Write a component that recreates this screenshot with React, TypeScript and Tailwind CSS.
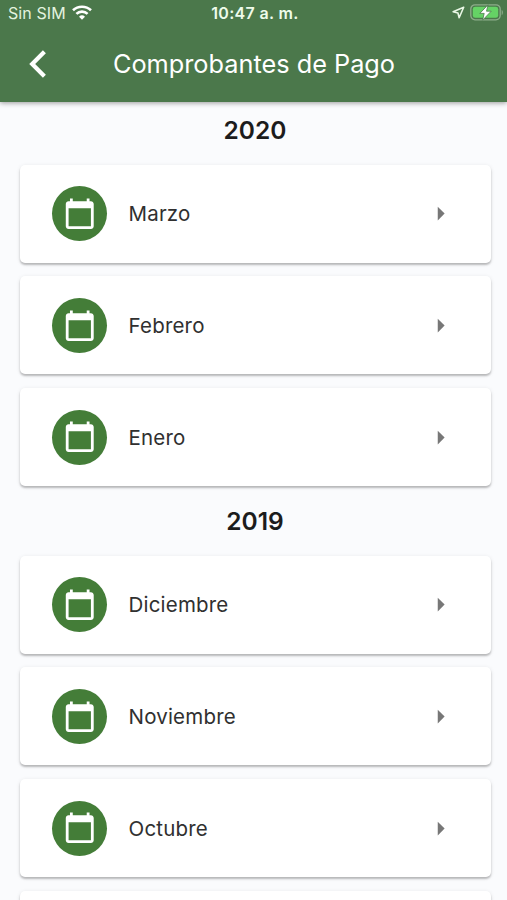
import React from 'react';
import { MdArrowRight, MdCalendarToday } from 'react-icons/md';

const years = [
  { year: '2020', months: ['Marzo', 'Febrero', 'Enero'] },
  { year: '2019', months: ['Diciembre', 'Noviembre', 'Octubre'] },
];

const StatusBar = () => (
  <div className="grid grid-cols-3 items-center h-[25px] pl-2 pr-[3px]">
    <div className="flex items-center gap-[6px]">
      <span className="text-[16px] leading-none tracking-[0.1px] text-[#e3f3df] whitespace-nowrap">Sin SIM</span>
      <svg width="20" height="15" viewBox="0 0 20 15" fill="none" stroke="#fff" strokeWidth="2.6">
        <path d="M1 5.3a13 13 0 0 1 18 0" />
        <path d="M4.4 8.9a8 8 0 0 1 11.2 0" />
        <path d="M10 14.7l-3-3a4.4 4.4 0 0 1 6 0z" fill="#fff" stroke="none" />
      </svg>
    </div>
    <span className="-ml-0.5 text-center text-[16px] leading-none font-semibold tracking-[0.35px] text-[#eefbea] whitespace-nowrap">
      10:47 a. m.
    </span>
    <div className="flex items-center justify-end gap-[5px]">
      <svg width="13" height="13" viewBox="0 0 14 14" fill="none" stroke="#e9f7e5" strokeWidth="1.7" strokeLinejoin="round">
        <path d="M12.6 1.4L1.2 6.2l5.2 1.3 1.3 5.1z" />
      </svg>
      <svg width="34" height="17" viewBox="0 0 34 17">
        <rect x="0.8" y="0.8" width="29.4" height="15" rx="4.2" fill="none" stroke="#8ead8b" strokeWidth="1.3" />
        <rect x="2.8" y="2.8" width="25.4" height="11" rx="2.4" fill="#65d365" />
        <path d="M31.7 6v5c1.6-.6 1.6-4.4 0-5z" fill="#8ead8b" />
        <path d="M18 .8L9.8 9.4h4.4l-1.6 6.8 8.6-9h-4.7z" fill="#fff" stroke="#4b784b" strokeWidth="0.8" />
      </svg>
    </div>
  </div>
);

const MonthCard = ({ month }: { month?: string }) => (
  <div className="flex items-center h-[98px] pl-[32.5px] pr-[33.5px] bg-white rounded-[5px] shadow-[0_2px_2px_rgba(0,0,0,0.22),0_1px_4px_rgba(0,0,0,0.1)] cursor-pointer">
    {month && (
      <>
        <div className="flex items-center justify-center size-[55px] rounded-full bg-[#447d38]">
          <MdCalendarToday className="size-[33.5px] text-white" />
        </div>
        <span className="ml-[21.5px] pt-[2px] flex-1 text-[20.5px] tracking-[0.2px] text-[#303030]">{month}</span>
        <MdArrowRight className="size-[33px] text-[#777777]" />
      </>
    )}
  </div>
);

const App = () => {
  return (
    <div className="h-[900px] overflow-hidden bg-[#fafbfd] font-['Inter','Roboto',sans-serif]">
      {/* Header */}
      <header className="relative h-[102px] bg-[#4b784b] shadow-[0_1px_5px_rgba(0,0,0,0.4)]">
        <StatusBar />
        <div className="grid grid-cols-[80px_1fr_80px] items-center h-[78px]">
          <svg className="ml-[28px]" width="20" height="28" viewBox="0 0 20 28" fill="none" stroke="#fff" strokeWidth="4.2">
            <path d="M16.4 1.8L4.2 14l12.2 12.2" />
          </svg>
          <h1 className="pl-px text-center text-[25.3px] leading-none text-white whitespace-nowrap">Comprobantes de Pago</h1>
        </div>
      </header>

      {/* Receipts by year */}
      <main className="pl-[19.5px] pr-[16.5px]">
        {years.map(({ year, months }, i) => (
          <section key={year}>
            <h2
              className={`text-center text-[24.5px] font-semibold text-[#1c1c1c] ${
                i === 0 ? 'h-[62.5px] leading-[57px]' : 'h-[69.5px] leading-[71px]'
              }`}
            >
              {year}
            </h2>
            <div className="flex flex-col gap-[13.75px]">
              {months.map((month) => (
                <MonthCard key={month} month={month} />
              ))}
            </div>
          </section>
        ))}
        <div className="mt-[13.75px]">
          <MonthCard />
        </div>
      </main>
    </div>
  );
};

export default App;
